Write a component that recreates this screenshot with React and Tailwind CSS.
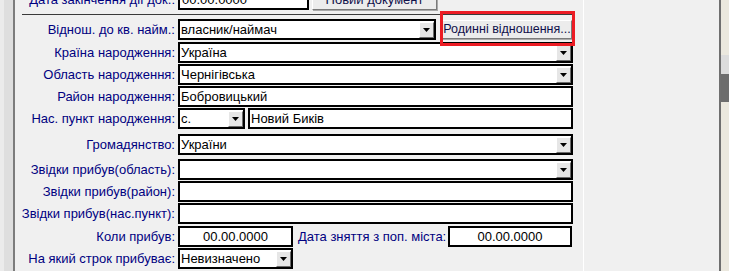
import React from 'react';

const DropBtn = () => (
  <div className="ml-auto h-[16px] w-[15px] shrink-0 bg-[#e6e6e6] border-t border-l border-t-white border-l-white border-r border-b border-r-[#6b6b6b] border-b-[#6b6b6b] flex items-center justify-center">
    <svg width="7" height="4" viewBox="0 0 7 4">
      <polygon points="0,0 7,0 3.5,4" fill="#000" />
    </svg>
  </div>
);

const Combo = ({ value, className = '' }) => (
  <div className={`h-[21px] border-2 border-black bg-white flex items-center pl-[1px] text-black ${className}`}>
    <span className="leading-none">{value}</span>
    <DropBtn />
  </div>
);

const Field = ({ value = '', center, className = '' }) => (
  <div className={`h-[21px] border-2 border-black bg-white flex items-center px-[1px] text-black ${center ? 'justify-center' : ''} ${className}`}>
    <span className="leading-none">{value}</span>
  </div>
);

const Row = ({ label, mt, children }) => (
  <div className={`flex items-center h-[21px] ${mt}`}>
    <div className="w-[160px] shrink-0 text-right text-[#000080] whitespace-nowrap">{label}</div>
    <div className="ml-[3px] w-[395px] flex items-center">{children}</div>
  </div>
);

const WinButton = ({ children, className = '' }) => (
  <div className={`bg-[#ececec] border-t border-l border-white border-r border-b border-r-[#7a7a7a] border-b-[#7a7a7a] shadow-[1px_1px_0_#a9a9a9] flex items-center justify-center text-[#10104a] whitespace-nowrap ${className}`}>
    {children}
  </div>
);

export default function App() {
  return (
    <div className="w-[729px] h-[271px] overflow-hidden flex bg-[#f0f0f0] font-['Liberation_Sans',Arial,sans-serif] text-[13px]">
      {/* left strip */}
      <div className="w-[13px] h-full flex">
        <div className="w-[4px] h-full bg-[#ebebeb]" />
        <div className="w-[9px] h-full bg-[#dedede]" />
      </div>
      <div className="w-[2px] h-full bg-[#7c7c7c]" />

      {/* form panel */}
      <div className="w-[568px] h-full flex flex-col">
        <div className="flex items-center h-[21px] -mt-[11px]">
          <div className="w-[160px] shrink-0 text-right text-[#000080] whitespace-nowrap">Дата закінчення дії док.:</div>
          <Field value="00.00.0000" className="ml-[3px] w-[131px] pl-[2px]" />
          <WinButton className="ml-[3px] w-[125px] h-[21px]">Новий документ</WinButton>
        </div>

        <div className="mt-[4px] ml-[7px] w-[553px] h-[1px] bg-[#3a3a3a]" />

        <Row label="Віднош. до кв. найм.:" mt="mt-[4px]">
          <Combo value="власник/наймач" className="w-[258px]" />
          <div className="relative ml-[6px]">
            <WinButton className="w-[130px] h-[19px] text-[12.5px]">Родинні відношення...</WinButton>
            <div className="absolute left-[-2px] top-[-9px] w-[135px] h-[35px] border-[3px] border-[#ec1c24]" />
          </div>
        </Row>
        <Row label="Країна народження:" mt="mt-[2px]">
          <Combo value="Україна" className="w-[395px]" />
        </Row>
        <Row label="Область народження:" mt="mt-[1px]">
          <Combo value="Чернігівська" className="w-[395px]" />
        </Row>
        <Row label="Район народження:" mt="mt-[1px]">
          <Field value="Бобровицький" className="w-[395px]" />
        </Row>
        <Row label="Нас. пункт народження:" mt="mt-[1px]">
          <Combo value="с." className="w-[67px]" />
          <Field value="Новий Биків" className="ml-[3px] w-[325px]" />
        </Row>
        <Row label="Громадянство:" mt="mt-[5px]">
          <Combo value="України" className="w-[395px]" />
        </Row>
        <Row label="Звідки прибув(область):" mt="mt-[4px]">
          <Combo value="" className="w-[395px]" />
        </Row>
        <Row label="Звідки прибув(район):" mt="mt-[1px]">
          <Field className="w-[395px]" />
        </Row>
        <Row label="Звідки прибув(нас.пункт):" mt="mt-[1px]">
          <Field className="w-[395px]" />
        </Row>
        <Row label="Коли прибув:" mt="mt-[2px]">
          <Field value="00.00.0000" center className="w-[115px]" />
          <div className="ml-[5px] w-[148px] text-[#000080] whitespace-nowrap">Дата зняття з поп. міста:</div>
          <Field value="00.00.0000" center className="ml-[2px] w-[124px]" />
        </Row>
        <Row label="На який строк прибуває:" mt="mt-[1px]">
          <Combo value="Невизначено" className="w-[115px]" />
        </Row>
      </div>

      {/* right panel */}
      <div className="w-[1px] h-full bg-white" />
      <div className="flex-1 h-full bg-[#f0f0f0]" />
      <div className="w-[2px] h-full bg-[#6f6f6f]" />
      <div className="w-[8px] h-full flex flex-col bg-[#ebe8de]">
        <div className="h-[55px]" />
        <div className="h-[19px] bg-[#dcdcdc]" />
        <div className="h-[28px] bg-[#6d6d6d]" />
        <div className="flex-1" />
      </div>
    </div>
  );
}
